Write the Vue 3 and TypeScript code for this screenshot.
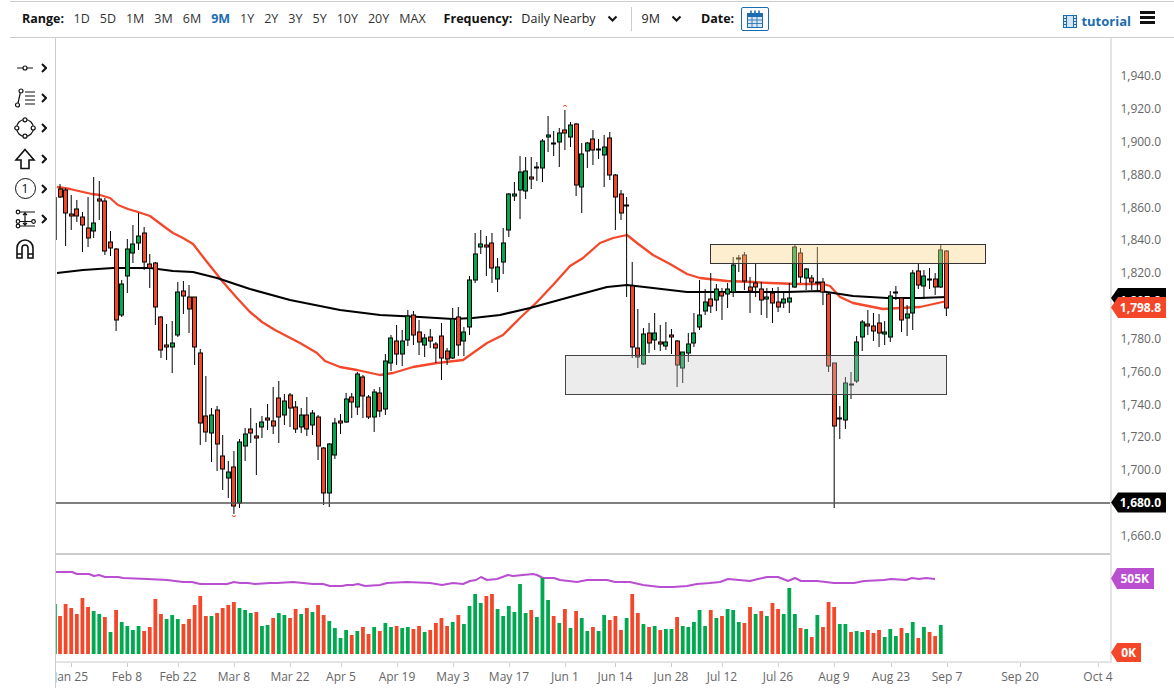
<script setup lang="ts">
type Candle = [number, number, number, number, 0 | 1];

const ranges = ['1D', '5D', '1M', '3M', '6M', '9M', '1Y', '2Y', '3Y', '5Y', '10Y', '20Y', 'MAX'];

// pixel rows: wick top, body top, body bottom, wick bottom, 1 = up day
const candles: Candle[] = [
  [184, 189, 197, 198, 0], [188, 190, 213, 246, 0], [195, 214, 216, 230, 0], [200, 209, 216, 222, 0],
  [212, 217, 225, 252, 0], [197, 228, 238, 247, 0], [177, 223, 231, 238, 1], [181, 199, 201, 220, 0],
  [198, 201, 251, 255, 0], [231, 242, 248, 256, 0], [248, 249, 320, 331, 0], [280, 284, 315, 317, 1],
  [239, 249, 276, 293, 1], [225, 244, 253, 263, 1], [213, 236, 243, 250, 1], [227, 233, 262, 270, 0],
  [254, 264, 268, 288, 0], [262, 263, 307, 325, 0], [316, 317, 350, 358, 0], [324, 345, 347, 360, 0],
  [321, 343, 347, 373, 1], [282, 292, 335, 337, 1], [281, 291, 296, 314, 0], [285, 297, 309, 333, 0],
  [297, 297, 347, 365, 0], [349, 353, 423, 445, 0], [376, 416, 432, 442, 0], [408, 415, 433, 462, 1],
  [406, 410, 444, 471, 0], [435, 456, 469, 490, 0], [461, 472, 478, 498, 1], [451, 467, 506, 514, 0],
  [439, 442, 503, 508, 1], [428, 434, 446, 461, 1], [408, 429, 433, 443, 0], [423, 436, 438, 475, 0],
  [416, 422, 427, 438, 1], [404, 418, 420, 430, 0], [387, 421, 426, 434, 0], [381, 398, 417, 443, 0],
  [394, 401, 415, 425, 1], [393, 395, 408, 427, 0], [401, 407, 429, 433, 0], [408, 415, 427, 433, 1],
  [397, 415, 429, 436, 0], [410, 413, 425, 435, 1], [415, 417, 446, 460, 0], [447, 448, 493, 505, 0],
  [443, 444, 493, 507, 1], [418, 423, 455, 459, 1], [414, 421, 423, 434, 0], [393, 399, 422, 423, 1],
  [393, 397, 402, 418, 0], [372, 374, 407, 415, 1], [375, 377, 396, 418, 0], [395, 397, 417, 419, 0],
  [389, 392, 417, 432, 1], [387, 393, 411, 417, 0], [354, 361, 409, 415, 1], [335, 338, 363, 371, 1],
  [325, 341, 354, 365, 0], [330, 341, 354, 366, 1], [310, 316, 340, 346, 1], [311, 315, 335, 345, 0],
  [320, 332, 342, 355, 0], [334, 338, 345, 357, 1], [329, 337, 341, 348, 0], [342, 344, 348, 363, 0],
  [323, 336, 358, 380, 0], [348, 351, 359, 365, 0], [308, 319, 358, 359, 1], [307, 317, 345, 356, 0],
  [327, 332, 341, 356, 1], [276, 280, 327, 335, 1], [233, 254, 280, 283, 1], [230, 244, 247, 254, 1],
  [236, 245, 247, 276, 0], [233, 243, 268, 283, 0], [258, 267, 279, 292, 1], [228, 243, 262, 274, 1],
  [193, 194, 230, 237, 1], [182, 194, 196, 201, 1], [156, 172, 190, 219, 1], [157, 171, 191, 199, 1],
  [157, 177, 179, 189, 0], [162, 167, 168, 181, 1], [139, 141, 168, 182, 1], [116, 135, 137, 152, 1],
  [131, 143, 144, 156, 0], [128, 133, 142, 167, 1], [110, 130, 133, 150, 0], [122, 125, 137, 147, 1],
  [123, 124, 185, 196, 0], [143, 154, 187, 213, 1], [142, 143, 151, 168, 1], [130, 139, 150, 165, 0],
  [139, 149, 150, 159, 1], [135, 147, 155, 187, 1], [132, 138, 175, 180, 0], [174, 175, 197, 230, 0],
  [190, 194, 213, 220, 0], [197, 205, 206, 297, 0], [262, 286, 347, 358, 0], [309, 348, 357, 368, 0],
  [328, 334, 364, 365, 1], [323, 333, 343, 353, 0], [313, 333, 340, 350, 1], [325, 342, 344, 351, 0],
  [322, 342, 346, 350, 1], [329, 335, 337, 354, 0], [340, 341, 365, 387, 0], [352, 352, 368, 383, 1],
  [333, 344, 353, 362, 1], [313, 333, 343, 347, 1], [280, 315, 327, 330, 1], [289, 302, 311, 315, 1],
  [273, 299, 306, 313, 0], [284, 289, 300, 311, 1], [288, 292, 296, 320, 0], [283, 289, 294, 308, 1],
  [257, 265, 292, 297, 1], [255, 258, 259, 272, 0], [252, 255, 281, 290, 0], [277, 287, 291, 313, 0],
  [264, 283, 287, 297, 0], [282, 289, 300, 315, 0], [288, 297, 299, 318, 1], [288, 293, 303, 323, 0],
  [287, 302, 307, 312, 0], [292, 299, 303, 308, 1], [283, 298, 302, 313, 1], [245, 247, 287, 288, 1],
  [248, 253, 277, 283, 0], [268, 269, 278, 290, 1], [275, 278, 282, 290, 0], [247, 282, 283, 290, 0],
  [278, 282, 292, 305, 0], [293, 294, 366, 372, 0], [363, 363, 426, 508, 0], [406, 418, 419, 439, 0],
  [377, 383, 420, 429, 1], [372, 384, 385, 399, 0], [336, 342, 381, 383, 1], [320, 322, 337, 351, 1],
  [310, 324, 326, 335, 0], [313, 326, 331, 341, 0], [314, 323, 333, 347, 0], [321, 332, 334, 345, 1],
  [291, 296, 337, 342, 1], [286, 292, 293, 300, 1], [297, 298, 320, 332, 0], [305, 314, 318, 336, 1],
  [270, 273, 313, 330, 1], [263, 271, 285, 289, 0], [270, 276, 286, 299, 1], [268, 279, 280, 289, 0],
  [273, 279, 287, 295, 0], [245, 250, 287, 288, 1], [250, 251, 308, 316, 0]
];

// top of each volume bar and its colour, 0 = red
const volumes: [number, 0 | 1][] = [
  [616, 0], [604, 0], [608, 0], [614, 0], [598, 0], [607, 0], [611, 1], [614, 1], [617, 0], [632, 1],
  [610, 0], [622, 1], [626, 1], [630, 1], [626, 1], [631, 0], [627, 0], [599, 0], [614, 0], [619, 1],
  [615, 1], [619, 1], [624, 0], [619, 0], [605, 0], [596, 0], [616, 0], [616, 1], [613, 0], [608, 0],
  [605, 0], [602, 0], [608, 1], [610, 1], [613, 1], [612, 0], [626, 1], [625, 1], [618, 0], [613, 1],
  [615, 1], [618, 0], [609, 0], [614, 1], [608, 0], [612, 1], [605, 0], [615, 0], [621, 1], [628, 1],
  [638, 1], [630, 1], [635, 0], [631, 1], [627, 0], [634, 0], [627, 1], [631, 0], [623, 1], [627, 1],
  [626, 0], [628, 1], [627, 1], [629, 0], [626, 0], [632, 1], [630, 0], [623, 0], [618, 0], [626, 0],
  [622, 1], [615, 0], [624, 1], [606, 1], [594, 1], [603, 1], [596, 0], [594, 0], [609, 1], [616, 1],
  [606, 1], [612, 1], [584, 1], [613, 1], [610, 0], [617, 1], [578, 1], [600, 1], [616, 0], [623, 1],
  [609, 0], [628, 1], [611, 0], [618, 1], [631, 1], [627, 0], [631, 1], [615, 1], [620, 0], [616, 0],
  [630, 0], [618, 1], [594, 0], [613, 0], [624, 1], [627, 0], [626, 1], [630, 0], [629, 1], [629, 1],
  [617, 0], [626, 1], [627, 1], [622, 1], [610, 1], [626, 1], [610, 0], [618, 1], [616, 0], [609, 1],
  [610, 1], [622, 1], [623, 0], [607, 0], [614, 1], [611, 0], [616, 1], [603, 0], [609, 0], [614, 1],
  [588, 1], [614, 1], [628, 0], [629, 1], [637, 0], [615, 1], [627, 0], [602, 0], [607, 0], [624, 1],
  [624, 1], [632, 0], [631, 1], [632, 1], [630, 0], [633, 0], [630, 0], [637, 1], [629, 1], [636, 1],
  [628, 0], [633, 1], [622, 1], [638, 0], [627, 1], [632, 0], [636, 0], [625, 1]
];

const slotX = (i: number) => 60 + i * 5.61;
const bodyX = (i: number) => Math.round(slotX(i) - 2.5) + 0.5;

const sma50 =
  '57,187 70,189 83,192 92,194 100,195 110,198 118,205 128,209 138,212 150,216 162,225 173,233 183,238 193,244 207,262 223,282 237,298 250,312 262,322 275,330 300,343 317,353 325,361 340,367 357,370 380,375 393,373 413,367 437,363 463,360 487,343 503,335 520,318 537,302 553,285 570,266 583,258 600,243 613,238 627,235 637,243 653,255 670,264 687,274 700,278 727,281 753,282 770,283 797,284 823,284 830,286 840,297 853,303 883,309 900,308 920,307 947,301';
const sma200 =
  '57,273 83,270 113,268 150,268 173,271 193,272 217,278 250,289 290,300 340,310 380,315 420,317 453,319 473,318 500,315 530,308 570,297 607,287 627,285 653,288 687,292 720,292 787,292 820,291 840,294 853,296 887,298 920,298 947,297';
const volAvg =
  '56,572 72,572 77,574 89,574 94,576 99,575 105,577 118,577 123,578 147,579 167,580 183,582 192,582 200,584 227,584 234,582 240,583 248,583 255,584 270,583 277,583 293,582 313,584 323,584 330,586 342,586 347,585 353,585 358,584 365,586 380,585 387,583 407,582 430,583 442,585 453,583 463,584 470,581 476,580 481,577 487,580 497,579 508,575 513,576 533,574 537,575 543,578 554,578 560,580 577,582 587,580 607,580 615,582 630,582 643,585 660,587 673,587 687,586 697,584 710,583 720,582 728,579 750,581 758,579 767,577 778,577 788,581 795,578 801,581 817,581 834,583 854,583 864,581 884,580 891,579 906,580 912,578 919,579 926,578 935,579';

const priceLabels = ['1,940.0', '1,920.0', '1,900.0', '1,880.0', '1,860.0', '1,840.0', '1,820.0', '1,780.0', '1,760.0', '1,740.0', '1,720.0', '1,700.0', '1,660.0'].map((text) => ({
  text,
  y: 535.5 - (Number(text.replace(',', '')) - 1660) * 1.6425
}));

const dates: [string, number][] = [
  ['Jan 25', 71], ['Feb 8', 127], ['Feb 22', 178], ['Mar 8', 234], ['Mar 22', 290], ['Apr 5', 341], ['Apr 19', 397],
  ['May 3', 453], ['May 17', 509], ['Jun 1', 565], ['Jun 14', 615], ['Jun 28', 671], ['Jul 12', 722], ['Jul 26', 778],
  ['Aug 9', 834], ['Aug 23', 891], ['Sep 7', 947], ['Sep 20', 1020], ['Oct 4', 1098]
];
</script>

<template>
  <div class="page">
    <header class="topbar">
      <b class="label range-label">Range:</b>
      <div class="ranges">
        <span v-for="r in ranges" :key="r" :class="{ active: r === '9M' }">{{ r }}</span>
      </div>
      <b class="label freq-label">Frequency:</b>
      <span class="freq">Daily Nearby</span>
      <svg class="chev" width="11" height="8" viewBox="0 0 11 8"><path d="M1.5 1.5 5.5 5.5 9.5 1.5" /></svg>
      <i class="divider"></i>
      <span class="period">9M</span>
      <svg class="chev" width="11" height="8" viewBox="0 0 11 8"><path d="M1.5 1.5 5.5 5.5 9.5 1.5" /></svg>
      <b class="label date-label">Date:</b>
      <button class="cal" type="button">
        <svg width="18" height="20" viewBox="0 0 18 20">
          <rect x="1.5" y="4.5" width="15" height="14" fill="#d6e6f4" stroke="#1b6cb0" />
          <rect x="1.5" y="4.5" width="15" height="3" fill="#1b6cb0" stroke="#1b6cb0" />
          <path d="M5 1.5v4M9 1.5v4M13 1.5v4" stroke="#1b6cb0" stroke-width="1.6" />
          <path d="M1.5 11h15M1.5 14.5h15M6 7.5v11M11 7.5v11" stroke="#1b6cb0" stroke-width=".8" />
        </svg>
      </button>
      <a class="tutorial">
        <svg width="14" height="13" viewBox="0 0 14 13">
          <rect x=".5" y=".5" width="13" height="12" fill="#d6e6f4" stroke="#1b6cb0" />
          <path d="M3.5 .5v12M10.5 .5v12M.5 3.5h3M.5 6.5h3M.5 9.5h3M10.5 3.5h3M10.5 6.5h3M10.5 9.5h3" stroke="#1b6cb0" fill="none" />
        </svg>
        tutorial
      </a>
      <div class="burger"><i></i><i></i><i></i></div>
    </header>

    <div class="main">
      <aside class="tools">
        <div class="tool">
          <svg width="24" height="24" viewBox="0 0 24 24"><path d="M4 12h6M14 12h6" /><circle cx="12" cy="12" r="2" /></svg>
          <svg class="more" width="6" height="10" viewBox="0 0 6 10"><path d="M1 1l4 4-4 4" /></svg>
        </div>
        <div class="tool">
          <svg width="24" height="24" viewBox="0 0 24 24"><circle cx="8" cy="5" r="2" /><circle cx="4.5" cy="19" r="2" /><path d="M7.3 7 5 17M12 6h10M12 10h10M12 14h10M12 18h10" /></svg>
          <svg class="more" width="6" height="10" viewBox="0 0 6 10"><path d="M1 1l4 4-4 4" /></svg>
        </div>
        <div class="tool">
          <svg width="24" height="24" viewBox="0 0 24 24"><circle cx="12" cy="12" r="8.5" /><circle cx="12" cy="3.8" r="2" fill="#fff" /><circle cx="12" cy="20.2" r="2" fill="#fff" /><circle cx="3.8" cy="12" r="2" fill="#fff" /><circle cx="20.2" cy="12" r="2" fill="#fff" /></svg>
          <svg class="more" width="6" height="10" viewBox="0 0 6 10"><path d="M1 1l4 4-4 4" /></svg>
        </div>
        <div class="tool">
          <svg width="24" height="24" viewBox="0 0 24 24"><path d="M12 2.5 21 13h-5v8.5H8V13H3Z" stroke-width="1.6" /></svg>
          <svg class="more" width="6" height="10" viewBox="0 0 6 10"><path d="M1 1l4 4-4 4" /></svg>
        </div>
        <div class="tool">
          <span class="one">1</span>
          <svg class="more" width="6" height="10" viewBox="0 0 6 10"><path d="M1 1l4 4-4 4" /></svg>
        </div>
        <div class="tool">
          <svg width="24" height="24" viewBox="0 0 24 24"><circle cx="5" cy="5" r="1.8" /><circle cx="5" cy="14.5" r="1.8" /><circle cx="5" cy="19" r="1.8" /><circle cx="20.5" cy="14.5" r="1.8" /><path d="M7 5h15M7 14.5h11.5M7 19h15M12 6v12M10 8l2-2 2 2M10 16l2 2 2-2" /></svg>
          <svg class="more" width="6" height="10" viewBox="0 0 6 10"><path d="M1 1l4 4-4 4" /></svg>
        </div>
        <div class="tool">
          <svg width="24" height="24" viewBox="0 0 24 24"><path d="M4 21V11a8 8 0 0 1 16 0v10h-5V11a3 3 0 0 0-6 0v10ZM4 17h5M15 17h5" stroke-width="1.6" /></svg>
        </div>
      </aside>

      <svg class="chart" width="1118" height="650" viewBox="56 38 1118 650">
        <!-- moving averages sit under the candles -->
        <polyline :points="sma50" fill="none" stroke="#f4482b" stroke-width="2.3" stroke-linejoin="round" />
        <polyline :points="sma200" fill="none" stroke="#000" stroke-width="2.2" stroke-linejoin="round" />

        <line x1="56.5" x2="56.5" y1="197" y2="240" stroke="#555" />
        <g v-for="(c, i) in candles" :key="i">
          <line :x1="slotX(i)" :x2="slotX(i)" :y1="c[0]" :y2="c[3]" stroke="#000" stroke-width="1" />
          <rect :x="bodyX(i)" :y="c[1]" width="4" :height="c[2] - c[1]" :fill="c[4] ? '#00a94f' : '#f4472a'" stroke="#000" stroke-width="1" />
        </g>

        <path d="M232 515.5q2 2.5 4 0" fill="none" stroke="#f4472a" />
        <path d="M563 106.5q2-2.5 4 0" fill="none" stroke="#f4472a" />

        <rect x="710.5" y="244.5" width="275" height="19" fill="rgba(250,212,135,.4)" stroke="#333" />
        <rect x="565.5" y="355.5" width="381" height="39" fill="rgba(200,200,200,.35)" stroke="#444" />

        <line x1="56" x2="1111" y1="503" y2="503" stroke="#555" stroke-width="1.5" />

        <!-- volume pane -->
        <line x1="56" x2="1110" y1="554" y2="554" stroke="#ccc" stroke-width="2" />
        <polyline :points="volAvg" fill="none" stroke="#b94fd0" stroke-width="2" stroke-linejoin="round" />
        <rect x="56" y="604" width=".8" height="50" fill="#00a94f" />
        <rect
          v-for="(v, i) in volumes"
          :key="'v' + i"
          :x="slotX(i) - 1.9"
          :y="v[0]"
          width="3.8"
          :height="654 - v[0]"
          :fill="v[1] ? '#00a94f' : '#f4472a'"
        />

        <!-- axes -->
        <line x1="1111" x2="1111" y1="38" y2="663" stroke="#e4e4e4" stroke-width="2" />
        <line x1="56" x2="1110" y1="662" y2="662" stroke="#e4e4e4" stroke-width="2" />
        <g v-for="d in dates" :key="d[0]">
          <line :x1="d[1] + 0.5" :x2="d[1] + 0.5" y1="663" y2="667" stroke="#ccc" />
          <text class="date" :x="d[1]" y="681" text-anchor="middle">{{ d[0] }}</text>
        </g>
        <text v-for="p in priceLabels" :key="p.text" class="price" x="1161" :y="p.y + 4.5" text-anchor="end">{{ p.text }}</text>

        <!-- last value tags, the moving average tag is mostly hidden by the price tag -->
        <path d="M1111 298 1118 288H1166V308H1118Z" fill="#000" />
        <text class="tag" x="1161" y="304.500" text-anchor="end">1,805.9</text>
        <path d="M1111 307.500 1118 297H1166V318H1118Z" fill="#f4472a" />
        <text class="tag" x="1161" y="312" text-anchor="end">1,798.8</text>
        <path d="M1111 502.500 1118 492.500H1166V512.500H1118Z" fill="#000" />
        <text class="tag" x="1161" y="507" text-anchor="end">1,680.0</text>
        <path d="M1111 578.500 1117 568H1154V589H1117Z" fill="#b94fd0" />
        <text class="tag" x="1149" y="583" text-anchor="end">505K</text>
        <path d="M1111 652.500 1117 643H1141V662H1117Z" fill="#f4472a" />
        <text class="tag" x="1136" y="657" text-anchor="end">0K</text>
      </svg>
    </div>
  </div>
</template>

<style scoped>
.page {
  width: 1174px;
  height: 696px;
  overflow: hidden;
  background: #fff;
  color: #222;
  font-family: 'Open Sans', 'Noto Sans', sans-serif;
  font-size: 12.5px;
}

.topbar {
  box-sizing: border-box;
  display: flex;
  align-items: center;
  height: 37px;
  margin: 1px 0 0 10px;
  padding: 0 0 2px 12px;
  border-top: 1px solid #ccc;
  border-bottom: 1px solid #ccc;
}

.label {
  color: #111;
  font-weight: 700;
}

.ranges {
  display: flex;
  gap: 10px;
  margin-left: 9.5px;
  color: #333;
}

.ranges .active {
  color: #1b6cb0;
  font-weight: 700;
}

.freq-label {
  margin-left: 18px;
}

.freq {
  margin-left: 9px;
}

.chev {
  margin-left: 11px;
}

.chev path {
  fill: none;
  stroke: #111;
  stroke-width: 2;
}

.divider {
  width: 1px;
  height: 24px;
  margin: 0 10px 0 13px;
  background: #ccc;
}

.period + .chev {
  margin-left: 11px;
}

.date-label {
  margin-left: 19px;
}

.cal {
  display: flex;
  align-items: center;
  justify-content: center;
  width: 28px;
  height: 24px;
  margin-left: 7px;
  padding: 0;
  border: 1px solid #1b6cb0;
  border-radius: 2px;
  background: #fff;
}

.tutorial {
  display: flex;
  align-items: center;
  gap: 4px;
  margin: 5px 0 0 auto;
  color: #1b6cb0;
  font-weight: 700;
  font-size: 13px;
}

.burger {
  display: flex;
  flex-direction: column;
  gap: 2.5px;
  width: 15px;
  margin: 0 19px 2px 9px;
}

.burger i {
  height: 2.500px;
  background: #111;
}

.main {
  display: flex;
}

.tools {
  box-sizing: border-box;
  display: flex;
  flex-direction: column;
  width: 56px;
  height: 650px;
  padding-top: 15px;
  border-right: 1px solid #ccc;
}

.tool {
  display: flex;
  align-items: center;
  height: 30.2px;
  padding-left: 13px;
}

.tool svg {
  fill: none;
  stroke: #111;
  stroke-width: 1.2;
}

.tool .more {
  margin-left: 4px;
  stroke-width: 2;
}

.one {
  box-sizing: border-box;
  width: 21px;
  height: 21px;
  margin: 0 1.5px;
  border: 1.3px solid #111;
  border-radius: 50%;
  color: #111;
  font-size: 13px;
  line-height: 18px;
  text-align: center;
}

.chart {
  display: block;
}

.date,
.price {
  fill: #666;
  font-size: 12px;
}

.tag {
  fill: #fff;
  font-size: 12px;
  font-weight: 700;
}
</style>
